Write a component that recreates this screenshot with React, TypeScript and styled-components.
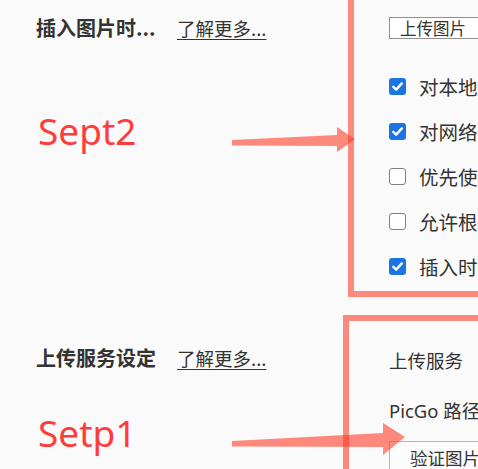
import React from "react";
import styled, { createGlobalStyle } from "styled-components";

const GlobalStyle = createGlobalStyle`
  html, body {
    margin: 0;
    padding: 0;
    background: #fafafa;
    overflow: hidden;
  }
  body {
    width: 478px;
    height: 469px;
    font-family: "Noto Sans", "Noto Sans CJK SC", sans-serif;
    color: #333;
  }
`;

const Page = styled.div`
  position: relative;
  width: 478px;
  height: 469px;
  overflow: hidden;
  padding: 17px 0 0 36px;
  box-sizing: border-box;
`;

const Section = styled.section<{ $top?: number }>`
  display: grid;
  grid-template-columns: 353px 240px;
  margin-top: ${(p) => p.$top ?? 0}px;
`;

const Header = styled.div<{ $h: number }>`
  display: flex;
  align-items: center;
  gap: 20px;
  height: ${(p) => p.$h}px;
  align-self: start;
`;

const Title = styled.div`
  width: 121px;
  font-family: "Noto Sans CJK SC", sans-serif;
  font-weight: 700;
  font-size: 20px;
  line-height: 24px;
  color: #333;
  white-space: nowrap;
`;

const Link = styled.a`
  font-family: "Noto Sans CJK SC", sans-serif;
  font-size: 18.5px;
  line-height: 24px;
  color: #333;
  text-decoration: underline;
  text-underline-offset: 3px;
  text-decoration-thickness: 1px;
  white-space: nowrap;
`;

const Controls = styled.div`
  display: flex;
  flex-direction: column;
  white-space: nowrap;
`;

const Select = styled.div`
  height: 22px;
  width: 200px;
  box-sizing: border-box;
  border: 1px solid #8f8f8f;
  background: #fff;
  padding-left: 10px;
  display: flex;
  align-items: center;
  font-family: "Noto Sans CJK SC", sans-serif;
  font-size: 16.5px;
  color: #333;
`;

const CheckList = styled.div`
  display: flex;
  flex-direction: column;
  margin-top: 24.5px;
`;

const CheckRow = styled.label`
  height: 45px;
  display: flex;
  align-items: center;
  gap: 13px;
  font-family: "Noto Sans CJK SC", sans-serif;
  font-size: 19.5px;
  color: #333;
`;

const Box = styled.span<{ $on: boolean }>`
  width: 17px;
  height: 17px;
  box-sizing: border-box;
  border-radius: 3px;
  flex: none;
  display: flex;
  align-items: center;
  justify-content: center;
  background: ${(p) => (p.$on ? "#1a75e2" : "#fff")};
  border: ${(p) => (p.$on ? "none" : "1.5px solid #808080")};
`;

const Row = styled.div<{ $h: number }>`
  height: ${(p) => p.$h}px;
  display: flex;
  align-items: center;
  font-family: "Noto Sans", "Noto Sans CJK SC", sans-serif;
  font-size: 18.5px;
  color: #333;
`;

const Button = styled.div`
  margin-top: 6px;
  height: 32px;
  width: 220px;
  box-sizing: border-box;
  border: 1px solid #b5b5b5;
  background: #fcfcfc;
  padding-left: 20px;
  display: flex;
  align-items: center;
  font-family: "Noto Sans CJK SC", sans-serif;
  font-size: 17.5px;
  color: #333;
`;

const Frame = styled.div<{ $l: number; $t: number; $b?: number }>`
  position: absolute;
  left: ${(p) => p.$l}px;
  top: ${(p) => p.$t}px;
  width: 300px;
  height: ${(p) => (p.$b !== undefined ? p.$b - p.$t : 300)}px;
  box-sizing: border-box;
  border: 6.5px solid rgba(255, 60, 40, 0.6);
`;

const Note = styled.div<{ $t: number }>`
  position: absolute;
  left: 38px;
  top: ${(p) => p.$t}px;
  font-family: "Noto Sans", sans-serif;
  font-size: 37px;
  color: #ff3c3c;
  line-height: normal;
`;

const Arrows = styled.svg`
  position: absolute;
  left: 0;
  top: 0;
  pointer-events: none;
`;

const Check = () => (
  <svg width="13" height="13" viewBox="0 0 13 13">
    <path
      d="M2.3 6.8 L5.2 9.6 L10.8 3.4"
      fill="none"
      stroke="#fff"
      strokeWidth="2.4"
      strokeLinecap="round"
      strokeLinejoin="round"
    />
  </svg>
);

const items: [string, boolean][] = [
  ["对本地位置的图片应用上述规则", true],
  ["对网络位置的图片应用上述规则", true],
  ["优先使用相对路径", false],
  ["允许根据 YAML 设置自动上传图片", false],
  ["插入时自动转义图片 URL", true],
];

export default function App() {
  return (
    <>
      <GlobalStyle />
      <Page>
        <Section>
          <Header $h={22}>
            <Title>插入图片时...</Title>
            <Link>了解更多...</Link>
          </Header>
          <Controls>
            <Select>上传图片</Select>
            <CheckList>
              {items.map(([t, on]) => (
                <CheckRow key={t}>
                  <Box $on={on}>{on && <Check />}</Box>
                  {t}
                </CheckRow>
              ))}
            </CheckList>
          </Controls>
        </Section>
        <Section $top={46.5}>
          <Header $h={46}>
            <Title>上传服务设定</Title>
            <Link>了解更多...</Link>
          </Header>
          <Controls>
            <Row $h={50}>上传服务</Row>
            <Row $h={50}>PicGo 路径</Row>
            <Button>验证图片上传选项</Button>
          </Controls>
        </Section>

        <Frame $l={348} $t={-20} $b={297} />
        <Frame $l={343} $t={315} />
        <Note $t={105}>Sept2</Note>
        <Note $t={407}>Setp1</Note>
        <Arrows width="478" height="469" viewBox="0 0 478 469">
          <polygon
            points="232,140 337,135 337,127 355,139.3 337,152 337,146 232,145.5"
            fill="rgba(255,60,40,0.6)"
          />
          <polygon
            points="232,441 383,433 383,423 405,437 383,455 383,447 232,446.5"
            fill="rgba(255,60,40,0.6)"
          />
        </Arrows>
      </Page>
    </>
  );
}
